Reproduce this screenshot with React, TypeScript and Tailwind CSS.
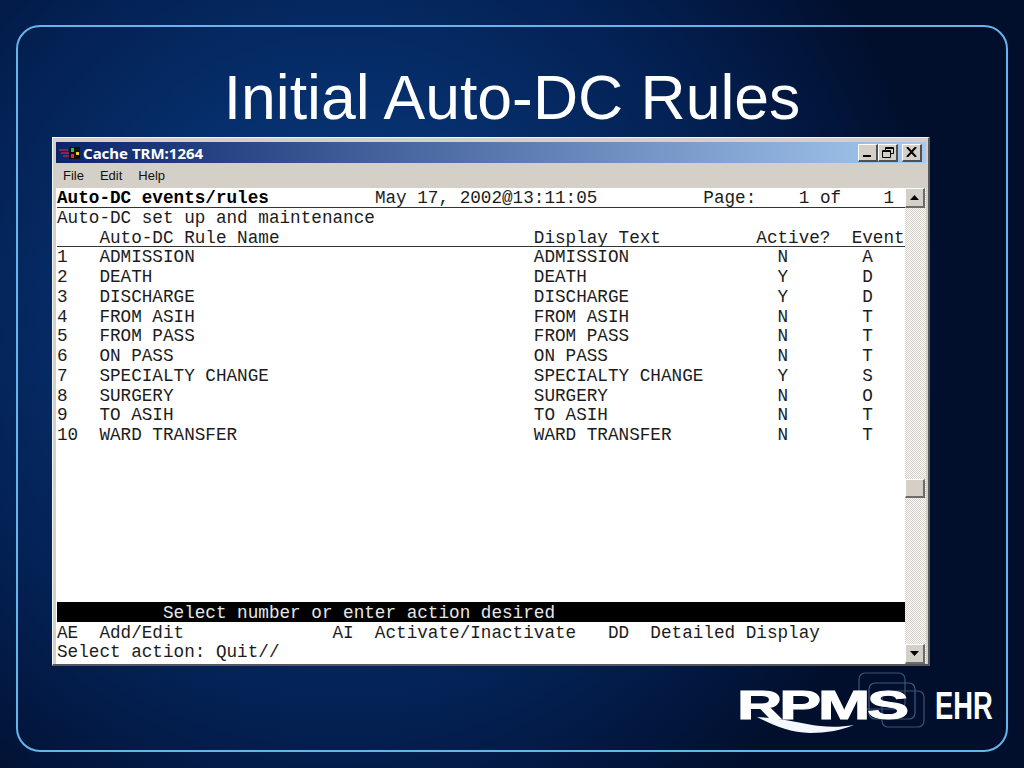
const mono = "font-['Liberation_Mono',monospace]";

// fixed-column terminal line, 80 chars wide
function line(parts: Array<[number, string]>) {
  let out = '';
  for (const [col, text] of parts) {
    out = out.padEnd(col, ' ') + text;
  }
  return out;
}

const rules = [
  ['1', 'ADMISSION', 'ADMISSION', 'N', 'A'],
  ['2', 'DEATH', 'DEATH', 'Y', 'D'],
  ['3', 'DISCHARGE', 'DISCHARGE', 'Y', 'D'],
  ['4', 'FROM ASIH', 'FROM ASIH', 'N', 'T'],
  ['5', 'FROM PASS', 'FROM PASS', 'N', 'T'],
  ['6', 'ON PASS', 'ON PASS', 'N', 'T'],
  ['7', 'SPECIALTY CHANGE', 'SPECIALTY CHANGE', 'Y', 'S'],
  ['8', 'SURGERY', 'SURGERY', 'N', 'O'],
  ['9', 'TO ASIH', 'TO ASIH', 'N', 'T'],
  ['10', 'WARD TRANSFER', 'WARD TRANSFER', 'N', 'T'],
];

function Row({ children, className = 'pt-px' }: { children?: React.ReactNode; className?: string }) {
  return <div className={`h-[19.75px] leading-[19.75px] whitespace-pre ${className}`}>{children}</div>;
}

function CaptionButton({ children }: { children: React.ReactNode }) {
  return (
    <div className="w-[20px] h-[18px] flex items-center justify-center bg-[#d4d0c8] border-t border-l border-t-white border-l-white border-r-2 border-b-2 border-r-[#505050] border-b-[#505050]">
      {children}
    </div>
  );
}

function ScrollButton({ up }: { up?: boolean }) {
  return (
    <div className="w-[20px] h-[20px] shrink-0 flex items-center justify-center bg-[#d4d0c8] border-t border-l border-t-white border-l-white border-r-2 border-b-2 border-r-[#6b6b6b] border-b-[#6b6b6b]">
      <svg width="9" height="5" viewBox="0 0 9 5">
        <path d={up ? 'M4.5 0L9 5H0z' : 'M0 0h9L4.5 5z'} fill="#000" />
      </svg>
    </div>
  );
}

function Logo() {
  return (
    <div className="relative w-[262px] h-[66px] text-white font-['Liberation_Sans',sans-serif] font-bold">
      <svg className="absolute left-0 top-0" width="262" height="66" viewBox="0 0 262 66" fill="none">
        <rect x="127" y="2" width="46" height="36" rx="6" stroke="#3a5374" strokeWidth="1.2" />
        <rect x="137" y="12" width="46" height="36" rx="6" stroke="#3f5a7c" strokeWidth="1.2" />
        <rect x="150" y="20" width="42" height="36" rx="6" stroke="#3a5374" strokeWidth="1.2" />
        <path d="M25 46C40 54 58 62 78 62C95 62 110 59 122 54C105 57 90 56 75 53C60 50 42 47 25 46Z" fill="#f4f8fc" />
      </svg>
      <span className="absolute left-[5px] top-[14px] text-[41px] leading-[41px] tracking-[-2px] origin-left scale-x-[1.53] [-webkit-text-stroke:1px_white]">RPMS</span>
      <span className="absolute left-[203px] top-[16px] text-[38px] leading-[38px] origin-left scale-x-[0.72]">EHR</span>
    </div>
  );
}

export default function App() {
  return (
    <div className="w-[1024px] h-[768px] overflow-hidden pt-[25px] pl-[16px] bg-[radial-gradient(circle_600px_at_340px_320px,#0a3a80_0%,#06306e_35%,#031f50_70%,#010f2d_100%)]">
      <div className="w-[992px] h-[727px] rounded-[24px] border-2 border-[#64b5ec] flex flex-col">
        <h1 className="h-[110px] pt-[35px] text-center text-white text-[62.5px] leading-[70px] font-['Liberation_Sans',sans-serif] font-normal">
          Initial Auto-DC Rules
        </h1>

        <div className="ml-[34px] w-[878px] h-[529px] shrink-0 flex flex-col pt-[4px] pl-[3px] pr-[2px] bg-[#d4d0c8] border-t border-l border-t-[#f4f4f0] border-l-[#f4f4f0] border-r-2 border-b-2 border-r-[#55585c] border-b-[#55585c]">
          <div className="h-[21px] shrink-0 flex items-center justify-between pl-[2px] pr-[4px] bg-[linear-gradient(90deg,#0a246a,#a6caf0)]">
            <div className="flex items-center gap-px">
              <svg width="24" height="16" viewBox="0 0 24 16">
                <path d="M1 5h9M3 8h8M5 11h6" stroke="#b0243c" strokeWidth="1.5" />
                <rect x="11" y="2" width="11" height="12" fill="#101010" />
                <rect x="13" y="3" width="3" height="4" fill="#30c040" />
                <rect x="18" y="7" width="3" height="3" fill="#e8d820" />
                <rect x="13" y="9" width="3" height="4" fill="#e03030" />
              </svg>
              <span className="text-white text-[15px] font-bold leading-[20px] font-['Noto_Sans',sans-serif]">Cache TRM:1264</span>
            </div>
            <div className="flex items-center">
              <CaptionButton>
                <span className="mt-[8px] mr-[2px] w-[8px] h-[2px] bg-black" />
              </CaptionButton>
              <CaptionButton>
                <svg width="12" height="11" viewBox="0 0 12 11" fill="none" stroke="#000">
                  <path d="M3.5 3V.5h8v6H9" />
                  <path d="M3.5 1.5h8" />
                  <path d="M.5 3.5h8v7h-8z" />
                  <path d="M.5 4.5h8" />
                </svg>
              </CaptionButton>
              <div className="ml-[4px]">
                <CaptionButton>
                  <svg width="11" height="10" viewBox="0 0 11 10" stroke="#000" strokeWidth="2">
                    <path d="M1 0l9 10M10 0L1 10" />
                  </svg>
                </CaptionButton>
              </div>
            </div>
          </div>

          <div className="h-[25px] shrink-0 flex items-center gap-[16px] pl-[7px] text-[13px] text-[#111] font-['Liberation_Sans',sans-serif]">
            <span>File</span>
            <span>Edit</span>
            <span>Help</span>
          </div>

          <div className="flex flex-1 min-h-0 bg-white">
            <div className={`w-[849px] pl-px text-[17.66px] text-[#1c1c1c] ${mono}`}>
              <Row className="pt-px border-b border-[#333]">
                <span className="font-bold text-black">Auto-DC events/rules</span>
                {line([[10, 'May 17, 2002@13:11:05'], [41, 'Page:'], [50, '1 of'], [58, '1']])}
              </Row>
              <Row>Auto-DC set up and maintenance</Row>
              <Row className="pt-px border-b border-[#333]">
                {line([[4, 'Auto-DC Rule Name'], [45, 'Display Text'], [66, 'Active?'], [75, 'Event']])}
              </Row>
              {rules.map((r) => (
                <Row key={r[0]}>{line([[0, r[0]], [4, r[1]], [45, r[2]], [68, r[3]], [76, r[4]]])}</Row>
              ))}
              <div className="h-[157px]" />
              <Row className="pt-[2px] bg-black text-[#e8e8e8]">{line([[10, 'Select number or enter action desired']])}</Row>
              <Row className="pt-[2px]">{line([[0, 'AE'], [4, 'Add/Edit'], [26, 'AI'], [30, 'Activate/Inactivate'], [52, 'DD'], [56, 'Detailed Display']])}</Row>
              <Row className="pt-[2px]">Select action: Quit//</Row>
            </div>
            <div className="w-[21px] flex flex-col bg-[repeating-conic-gradient(#d4d0c8_0_25%,#ffffff_0_50%)] bg-[length:2px_2px]">
              <ScrollButton up />
              <div className="mt-[271px] w-[20px] h-[19px] shrink-0 bg-[#d4d0c8] border-t border-l border-t-white border-l-white border-r-2 border-b-2 border-r-[#6b6b6b] border-b-[#6b6b6b]" />
              <div className="flex-1" />
              <ScrollButton />
            </div>
          </div>
        </div>

        <div className="self-end mr-[12px] mt-[5px]">
          <Logo />
        </div>
      </div>
    </div>
  );
}
